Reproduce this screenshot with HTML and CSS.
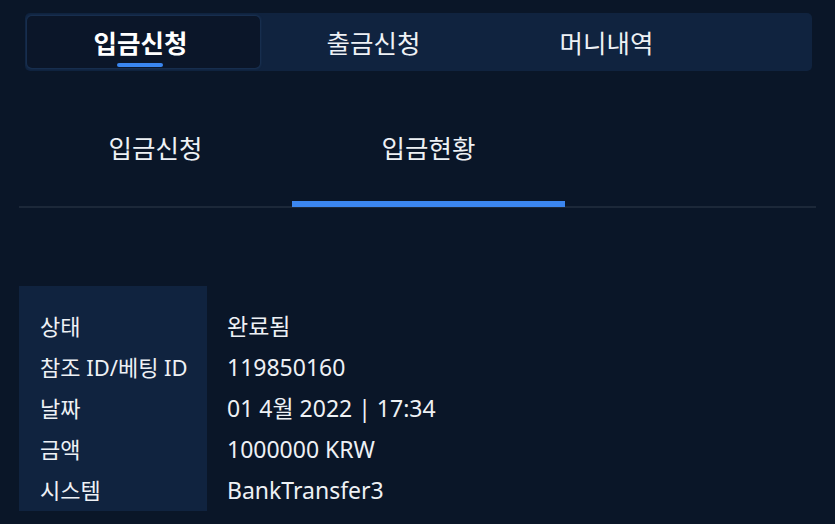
FILE: index.html
```html
<!DOCTYPE html>
<html lang="ko">
<head>
<meta charset="utf-8">
<link rel="stylesheet" href="styles.css">
</head>
<body>
<div class="page">
  <nav class="main-tabs">
    <div class="main-tab active">입금신청<span class="ind"></span></div>
    <div class="main-tab">출금신청</div>
    <div class="main-tab">머니내역</div>
  </nav>
  <div class="sub-tabs">
    <div class="sub-tab">입금신청</div>
    <div class="sub-tab active">입금현황</div>
  </div>
  <div class="info">
    <div class="labels">
      <div class="row">상태</div>
      <div class="row">참조 ID/베팅 ID</div>
      <div class="row">날짜</div>
      <div class="row">금액</div>
      <div class="row">시스템</div>
    </div>
    <div class="values">
      <div class="row">완료됨</div>
      <div class="row">119850160</div>
      <div class="row">01 4월 2022 | 17:34</div>
      <div class="row">1000000 KRW</div>
      <div class="row">BankTransfer3</div>
    </div>
  </div>
</div>
</body>
</html>
```
FILE: styles.css
```css
html, body {
  margin: 0;
  padding: 0;
  background: #0a1628;
  color: #f2f4f7;
  font-family: "Noto Sans CJK KR", "Noto Sans", sans-serif;
}
.page {
  width: 835px;
  height: 524px;
  overflow: hidden;
  padding: 13px 19px 0;
  box-sizing: border-box;
}
.main-tabs {
  margin: 0 4px 0 6px;
  height: 58px;
  background: #10233f;
  border-radius: 5px;
  display: flex;
  padding: 3px 2px;
  box-sizing: border-box;
}
.main-tab {
  position: relative;
  width: 233px;
  box-sizing: border-box;
  display: flex;
  align-items: center;
  justify-content: center;
  font-size: 25.5px;
  font-weight: 400;
  color: #eef1f5;
  padding: 0 6px 2px 0;
}
.main-tab.active {
  background: #0b1629;
  border-radius: 5px;
  font-weight: 700;
  color: #ffffff;
  box-shadow: 0 0 2px 1px rgba(40, 70, 110, 0.45);
}
.ind {
  position: absolute;
  left: 90px;
  bottom: 1px;
  width: 46px;
  height: 4px;
  border-radius: 2px;
  background: #3a86ef;
}
.sub-tabs {
  margin-top: 42px;
  display: flex;
  height: 93px;
  border-bottom: 2px solid #1c2839;
}
.sub-tab {
  width: 273px;
  display: flex;
  justify-content: center;
  padding-top: 16px;
  box-sizing: border-box;
  font-size: 25.5px;
  color: #eef1f5;
  line-height: 36px;
}
.sub-tab.active {
  border-bottom: 6px solid #3b86f0;
  margin-bottom: -1px;
}
.info {
  margin-top: 78px;
  display: flex;
  font-family: "Noto Sans", "Noto Sans CJK KR", sans-serif;
  font-size: 22px;
  color: #eef1f5;
}
.labels {
  width: 188px;
  background: #10233f;
  padding: 20px 0 0 21px;
  box-sizing: border-box;
}
.values {
  padding: 20px 0 0 20px;
  font-size: 23px;
}
.row {
  height: 41px;
  line-height: 41px;
  white-space: nowrap;
}
```
